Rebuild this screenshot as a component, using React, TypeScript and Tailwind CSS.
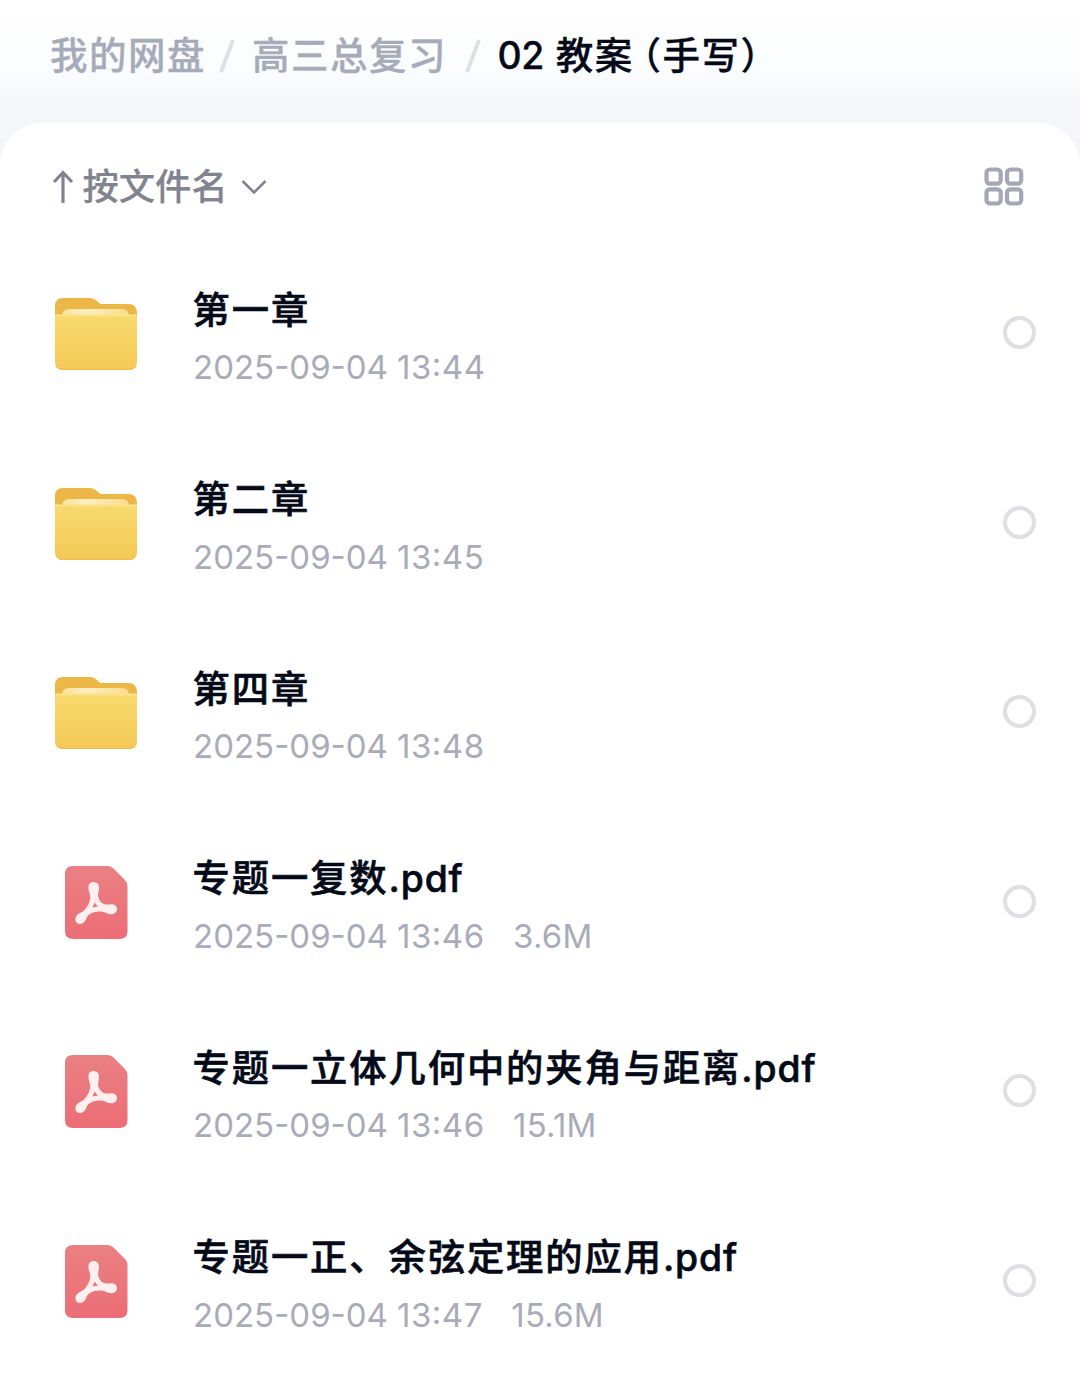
import clsx from "clsx";
import { Fragment } from "react";

type Entry = {
  name: string;
  ext?: string;
  date: string;
  time: string;
  size?: string;
  kind: "folder" | "pdf";
};

const TRAIL = [
  { label: "我的网盘", slash: "ml-[13px] mr-[17px]" },
  { label: "高三总复习", slash: "ml-[18px] mr-[16.500px]" },
];

const ENTRIES: Entry[] = [
  { name: "第一章", date: "2025-09-04", time: "13:44", kind: "folder" },
  { name: "第二章", date: "2025-09-04", time: "13:45", kind: "folder" },
  { name: "第四章", date: "2025-09-04", time: "13:48", kind: "folder" },
  { name: "专题一复数", ext: ".pdf", date: "2025-09-04", time: "13:46", size: "3.6M", kind: "pdf" },
  { name: "专题一立体几何中的夹角与距离", ext: ".pdf", date: "2025-09-04", time: "13:46", size: "15.1M", kind: "pdf" },
  { name: "专题一正、余弦定理的应用", ext: ".pdf", date: "2025-09-04", time: "13:47", size: "15.6M", kind: "pdf" },
];

function FolderIcon() {
  return (
    <svg width="82" height="73" viewBox="0 0 82 73" fill="none">
      <defs>
        <linearGradient id="folder-front" x1="0" y1="17" x2="0" y2="73" gradientUnits="userSpaceOnUse">
          <stop stopColor="#f8da6e" />
          <stop offset="1" stopColor="#f4c957" />
        </linearGradient>
        <linearGradient id="folder-sheet" x1="8" y1="0" x2="74" y2="0" gradientUnits="userSpaceOnUse">
          <stop stopColor="#fbe29a" />
          <stop offset="0.350" stopColor="#fdefc4" />
          <stop offset="1" stopColor="#f9dc8a" />
        </linearGradient>
      </defs>
      <path
        d="M0 9Q0 1 8 1H35Q39 1 42 4L44 6Q45 7 47 7H73Q82 7 82 16V30H0Z"
        fill="#edb748"
      />
      <path d="M7 20V18Q8 12 14 12H67Q73 12 74 18V20Z" fill="url(#folder-sheet)" />
      <path d="M0 17.500H82V65Q82 73 74 73H8Q0 73 0 65Z" fill="url(#folder-front)" />
      <path d="M1 18.500H81" stroke="#fce594" strokeWidth="1.500" />
      <path d="M2 69Q4 72.300 8 72.300H74Q78 72.300 80 69" stroke="#efbe4c" strokeWidth="1.300" />
    </svg>
  );
}

function PdfIcon() {
  return (
    <svg width="63" height="74" viewBox="0 0 63 74" fill="none">
      <defs>
        <linearGradient id="pdf-page" x1="0" y1="0" x2="0" y2="74" gradientUnits="userSpaceOnUse">
          <stop stopColor="#ea8083" />
          <stop offset="1" stopColor="#ec6d76" />
        </linearGradient>
      </defs>
      <path
        d="M0 8Q0 0 8 0H43Q46 0 48.500 2.500L59.500 13.500Q62.500 16.500 62.500 20V65Q62.500 73 54.500 73H8Q0 73 0 65Z"
        fill="url(#pdf-page)"
      />
      <path
        fill="#fff0ef"
        fillRule="evenodd"
        d="M28.500 16C32.300 16 34.300 18.800 34 22.500C33.700 26 32.600 28 33.300 31C34.300 34.500 36.500 37.700 40.500 38.500C42.800 38.900 44.500 38 47 38.200C50.200 38.500 52.300 40.600 52 43.500C51.700 46.700 49 48.500 45.500 48.200C41.500 47.800 40 45.800 36 45.500C31.500 45.200 27.500 46.100 24.300 48.500C21 50.700 22 53.200 19.500 55.800C17 58.400 13.500 58.700 11.500 56.500C9.500 54 10.300 50.200 13.200 48C15.700 46.200 17.500 46.200 19.500 44C22.700 40.500 24.700 36.700 25.300 32C25.700 28.500 23.500 26 23.400 22C23.300 18.500 25.200 16 28.500 16ZM29.800 36.500L27.300 41.500C29.200 40.900 31.200 40.800 33 40.900Z"
      />
    </svg>
  );
}

function GridIcon() {
  return (
    <svg width="40" height="40" viewBox="0 0 40 40" fill="none" stroke="#a5a6b8" strokeWidth="4.200">
      <rect x="2.500" y="2.500" width="14.200" height="14.200" rx="3.500" />
      <rect x="23" y="2.500" width="14.200" height="14.200" rx="3.500" />
      <rect x="2.500" y="22.300" width="14.200" height="14.200" rx="3.500" />
      <rect x="23" y="22.300" width="14.200" height="14.200" rx="3.500" />
    </svg>
  );
}

function Breadcrumb() {
  return (
    <nav className="flex h-[123px] items-start whitespace-nowrap pl-[50px] pt-[28px] text-[37.500px] leading-[56px] font-medium tracking-[1.500px] [-webkit-text-stroke:0.300px]">
      {TRAIL.map(({ label, slash }) => (
        <Fragment key={label}>
          <span className="text-[#a6abba]">{label}</span>
          <svg className={clsx("mt-[10.500px] h-[34px] w-[16px] shrink-0", slash)} viewBox="0 0 16 34" fill="none">
            <path d="M14 1L2 33" stroke="#dedfe3" strokeWidth="3.800" />
          </svg>
        </Fragment>
      ))}
      <span className="flex text-[#050a18]">
        <span className="tracking-[-0.500px]">02</span>
        <span className="ml-[12px]">教案</span>
        <span className="ml-[8.500px] [font-feature-settings:'halt']">（</span>
        <span>手写</span>
        <span className="[font-feature-settings:'halt']">）</span>
      </span>
    </nav>
  );
}

function SortBar() {
  return (
    <div className="flex h-[128px] items-center justify-between pl-[52px] pr-[56px]">
      <button type="button" className="flex items-center text-[#81838f]">
        <svg width="22" height="34" viewBox="0 0 22 34" fill="none" stroke="currentColor" strokeWidth="3.200">
          <path d="M11 33V3M2 12L11 2.500L20 12" />
        </svg>
        <span className="ml-[8.500px] text-[36.300px] leading-[50px] font-medium [-webkit-text-stroke:0.200px]">按文件名</span>
        <svg className="ml-[13px]" width="26" height="16" viewBox="0 0 26 16" fill="none" stroke="currentColor" strokeWidth="2.600">
          <path d="M1.500 2L13 13.500L24.500 2" />
        </svg>
      </button>
      <GridIcon />
    </div>
  );
}

function Row({ entry }: { entry: Entry }) {
  return (
    <li className="flex h-[189.600px] items-start pl-[55px] pr-[44px] pt-[30px]">
      <div className="mt-[16px] flex w-[82px] shrink-0 justify-center">
        {entry.kind === "folder" ? <FolderIcon /> : <PdfIcon />}
      </div>
      <div className="ml-[55.500px] mt-[1.500px] flex-1 whitespace-nowrap">
        <div className="text-[37.300px] leading-[56px] font-medium tracking-[1.900px] text-[#050a18] [-webkit-text-stroke:0.600px]">
          {entry.name}
          {entry.ext !== undefined && <span className="tracking-[0.900px]">{entry.ext}</span>}
        </div>
        <div className="ml-[0.500px] mt-[6.500px] flex text-[33px] leading-[44px] text-[#a9acb8] [font-feature-settings:'case']">
          <span className="w-[204px]">{entry.date}</span>
          <span className="tracking-[0.500px]">{entry.time}</span>
          {entry.size !== undefined && <span className="ml-[28.500px] tracking-[0.200px]">{entry.size}</span>}
        </div>
      </div>
      <span className="mt-[35px] size-[33px] shrink-0 rounded-full border-4 border-[#dedfe3]" />
    </li>
  );
}

export default function App() {
  return (
    <div className="h-[1388px] w-[1080px] overflow-hidden bg-[linear-gradient(#ffffff_0px,#fbfcfd_70px,#f5f6f9_110px,#f5f6f9_100%)] font-['Inter','Noto_Sans_CJK_SC',sans-serif]">
      <Breadcrumb />
      <main className="h-[1265px] rounded-t-[42px] bg-white">
        <SortBar />
        <ul>
          {ENTRIES.map((entry) => (
            <Row key={entry.name} entry={entry} />
          ))}
        </ul>
      </main>
    </div>
  );
}
